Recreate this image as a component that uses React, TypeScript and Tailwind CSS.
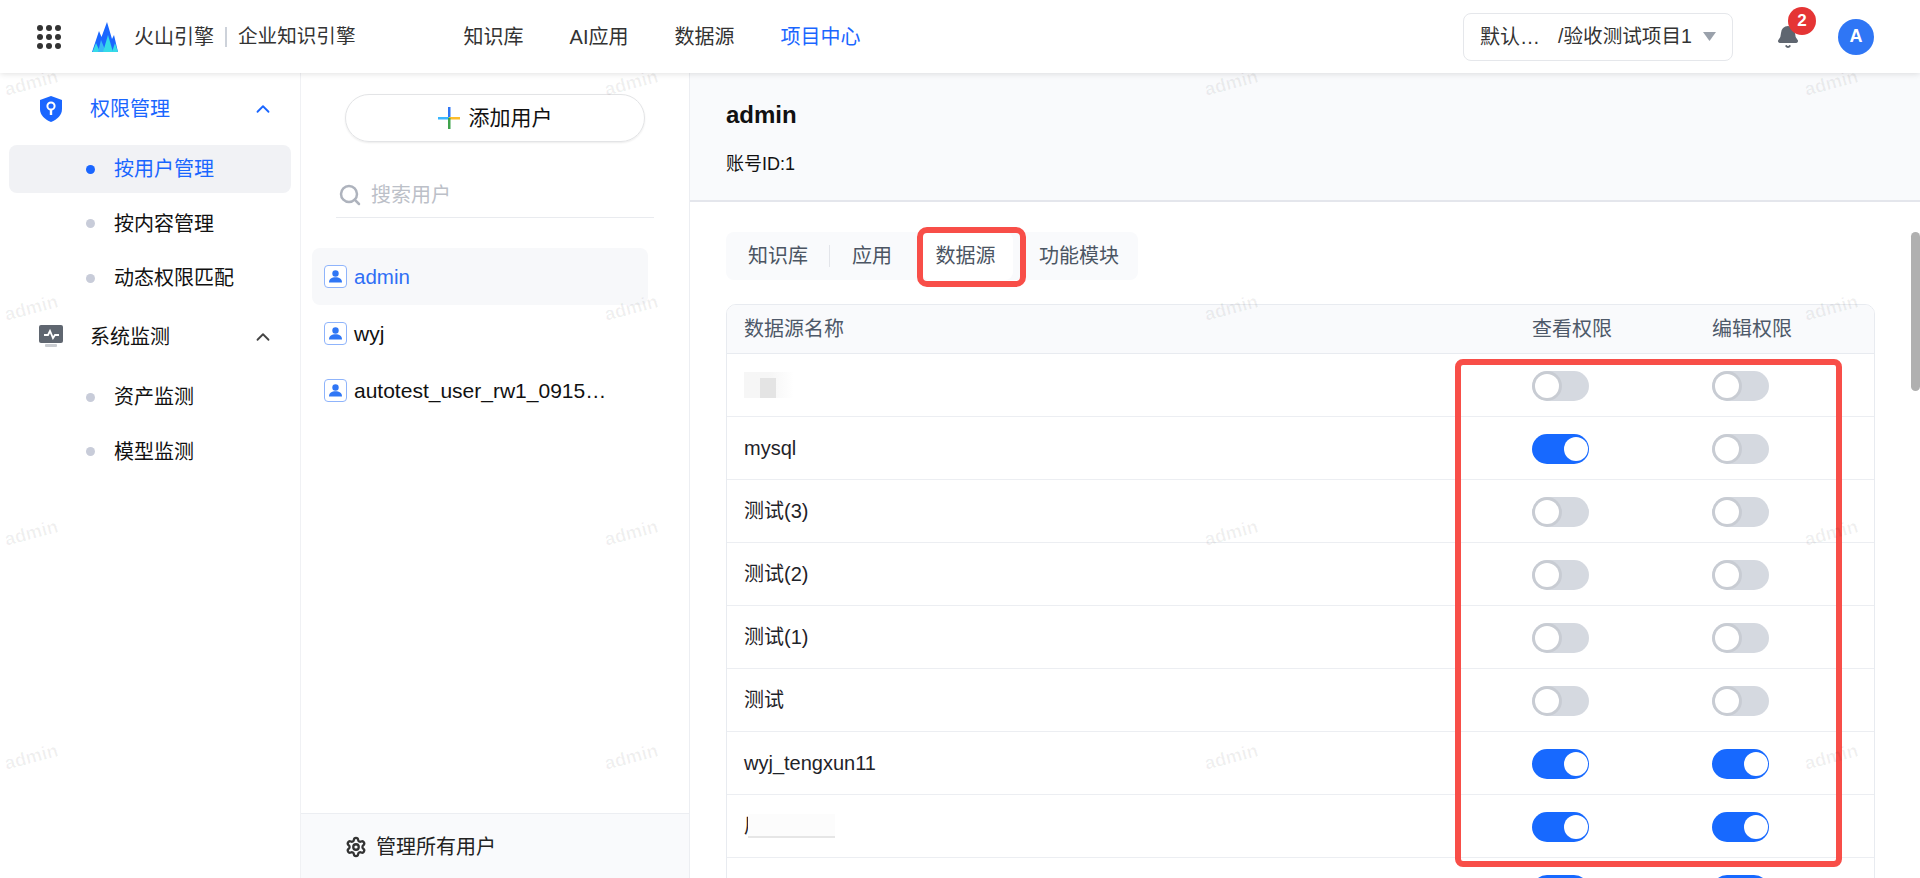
import { Bell, ChevronUp, Search, Settings } from "lucide-react";

const rows = [
  { name: "blur1", view: false, edit: false },
  { name: "mysql", view: true, edit: false },
  { name: "测试(3)", view: false, edit: false },
  { name: "测试(2)", view: false, edit: false },
  { name: "测试(1)", view: false, edit: false },
  { name: "测试", view: false, edit: false },
  { name: "wyj_tengxun11", view: true, edit: true },
  { name: "blur2", view: true, edit: true },
  { name: "", view: true, edit: true },
];

const watermarkXs = [0, 600, 1200, 1800];
const watermarkYs = [69, 294, 519, 743];

function Toggle({ on }: { on: boolean }) {
  return (
    <div
      className={
        on
          ? "flex h-[30px] w-[57px] items-center justify-end overflow-hidden rounded-full bg-[#1769ff] pr-[1px]"
          : "flex h-[30px] w-[57px] items-center justify-start overflow-hidden rounded-full bg-[#d5d9e0] pl-[3px]"
      }
    >
      <div
        className={
          on
            ? "h-[24px] w-[24px] rounded-full bg-white"
            : "h-[24px] w-[24px] rounded-full bg-white shadow-[0_0_0_3px_#c8ccd3]"
        }
      />
    </div>
  );
}

function RowName({ name }: { name: string }) {
  if (name === "blur1") {
    return (
      <div className="flex h-[26px] w-[50px] items-end bg-gradient-to-r from-[#f6f6f6] via-[#f6f6f6] to-white">
        <div className="ml-[16px] h-[20px] w-[16px] bg-[#e4e4e4]" />
      </div>
    );
  }
  if (name === "blur2") {
    return (
      <div className="flex items-center">
        <span>展</span>
        <div className="relative -ml-[16px] h-[24px] w-[87px] border-b-2 border-[#e6e6e6] bg-[#fcfcfc]" />
      </div>
    );
  }
  return <span>{name}</span>;
}

function SubItem({ label, active }: { label: string; active?: boolean }) {
  return (
    <div
      className={
        active
          ? "mx-[9px] flex h-[48px] items-center rounded-lg bg-[#f1f2f5] pl-[77px] text-[#1a66ff]"
          : "mx-[9px] flex h-[48px] items-center pl-[77px] text-[#111]"
      }
    >
      <span
        className={
          active
            ? "mr-[19px] h-[9px] w-[9px] rounded-full bg-[#1a66ff]"
            : "mr-[19px] h-[9px] w-[9px] rounded-full bg-[#c8ccd9]"
        }
      />
      {label}
    </div>
  );
}

function UserIcon() {
  return (
    <svg width="24" height="24" viewBox="0 0 24 24" className="mr-[6px] shrink-0">
      <rect x="0.5" y="0.5" width="22" height="22" rx="3.5" fill="white" stroke="#8fb4fb" />
      <circle cx="11.5" cy="8.5" r="3.2" fill="#2f76f5" />
      <path d="M5 17.5c0-3.6 2.8-5.2 6.5-5.2s6.5 1.6 6.5 5.2z" fill="#2f76f5" />
    </svg>
  );
}

export default function App() {
  return (
    <div className="relative h-[878px] w-[1920px] overflow-hidden bg-white font-['Liberation_Sans','Noto_Sans_CJK_SC',sans-serif] text-[20px] text-[#1f2329]">
      <header className="relative z-20 flex h-[73px] items-center bg-white shadow-[0_1px_6px_rgba(0,0,0,0.12)]">
        <div className="ml-[37px] grid grid-cols-3 gap-x-[3px] gap-y-[3px]">
          {Array.from({ length: 9 }).map((_, i) => (
            <span key={i} className="h-[6px] w-[6px] rounded-full bg-[#333]" />
          ))}
        </div>
        <svg width="26" height="30" viewBox="0 0 26 30" className="ml-[31px]">
          <path d="M0 30 L7 9 L9.5 15 L15 0 L20 17 L22 13 L26 30 Z" fill="#1a66ff" />
          <path d="M0.5 30 L4 21 L8 30 Z" fill="#35dbe8" />
          <path d="M6 30 L9 18 L14 30 Z" fill="#38b8f5" />
          <path d="M11 30 L16 13 L21 30 Z" fill="#35dbe8" />
          <path d="M20 30 L23 21 L26 30 Z" fill="#35dbe8" />
        </svg>
        <span className="ml-[16px] text-[#333]">火山引擎</span>
        <span className="ml-[11px] h-[20px] w-[2px] bg-[#cdd2da]" />
        <span className="ml-[11px] text-[19.6px] text-[#333]">企业知识引擎</span>
        <nav className="ml-[108px] flex gap-[46px] text-[#333]">
          <span>知识库</span>
          <span>AI应用</span>
          <span>数据源</span>
          <span className="text-[#1a66ff]">项目中心</span>
        </nav>
        <div className="ml-auto flex h-[48px] w-[270px] items-center rounded-lg border border-[#e5e7eb] pl-[16px] text-[#333]">
          <span>默认…</span>
          <span className="ml-[18px] text-[19.6px]">/验收测试项目1</span>
          <svg width="13" height="9" viewBox="0 0 13 9" className="ml-[11px]">
            <path d="M0 0h13L6.500 9z" fill="#9aa1ab" />
          </svg>
        </div>
        <div className="relative ml-[43px] h-[28px] w-[24px]">
          <Bell size={24} fill="#5f6670" stroke="#5f6670" className="mt-[2px]" />
          <span className="absolute left-[12px] top-[-16px] flex h-[28px] w-[28px] items-center justify-center rounded-full bg-[#e53535] text-[17px] font-bold text-white">
            2
          </span>
        </div>
        <div className="ml-[38px] mr-[46px] flex h-[36px] w-[36px] items-center justify-center rounded-full bg-[#2f76f5] text-[18px] font-bold text-white">
          A
        </div>
      </header>

      <div className="flex h-[805px]">
        <aside className="w-[301px] shrink-0 border-r border-[#f0f1f4] pt-[12px]">
          <div className="flex h-[48px] items-center pl-[39px] text-[#1a66ff]">
            <svg width="24" height="26" viewBox="0 0 24 26">
              <path d="M12 0l11 4v9c0 6-4.500 10.500-11 13C5.500 23.500 1 19 1 13V4z" fill="#1a66ff" />
              <circle cx="12" cy="10" r="3.600" fill="none" stroke="white" strokeWidth="2" />
              <path d="M12 13v6" stroke="white" strokeWidth="2.400" />
            </svg>
            <span className="ml-[27px]">权限管理</span>
            <ChevronUp size={22} strokeWidth={2} className="ml-[82px]" />
          </div>
          <div className="mt-[12px] flex flex-col gap-[6.500px]">
            <SubItem label="按用户管理" active />
            <SubItem label="按内容管理" />
            <SubItem label="动态权限匹配" />
          </div>
          <div className="mt-[11px] flex h-[48px] items-center pl-[39px] text-[#111]">
            <svg width="25" height="24" viewBox="0 0 25 24">
              <rect x="0" y="0" width="24" height="18" rx="2" fill="#5f6670" />
              <rect x="6" y="19" width="12" height="3" rx="1" fill="#c9ccd1" />
              <path d="M5 10h4l2-4 3 7 2-3h4" fill="none" stroke="white" strokeWidth="1.800" />
            </svg>
            <span className="ml-[26px]">系统监测</span>
            <ChevronUp size={22} strokeWidth={2} color="#444" className="ml-[82px]" />
          </div>
          <div className="mt-[12px] flex flex-col gap-[6.500px]">
            <SubItem label="资产监测" />
            <SubItem label="模型监测" />
          </div>
        </aside>

        <section className="flex w-[389px] shrink-0 flex-col border-r border-[#eceef2]">
          <button className="mx-[44px] mt-[21px] flex h-[48px] items-center justify-center rounded-full border border-[#e3e4e6] shadow-[0_1px_2px_rgba(0,0,0,0.08)]">
            <svg width="22" height="22" viewBox="0 0 22 22">
              <rect x="10" y="0" width="2.500" height="11" fill="#2f76f5" />
              <rect x="0" y="10" width="11" height="2.500" fill="#38b6ff" />
              <rect x="11" y="10" width="11" height="2.500" fill="#fbbc2c" />
              <rect x="10" y="11" width="2.500" height="11" fill="#3fa34d" />
            </svg>
            <span className="ml-[9px] text-[21px] text-[#111]">添加用户</span>
          </button>
          <div className="mx-[35px] mt-[22px] flex h-[54px] items-center border-b border-[#e9ebef] pl-[2px] pt-[8px] text-[#bcc0c8]">
            <Search size={24} strokeWidth={2.500} color="#aeb3bd" />
            <span className="ml-[9px]">搜索用户</span>
          </div>
          <div className="mt-[30px] flex flex-1 flex-col pl-[11px] pr-[41px]">
            <div className="flex h-[57px] items-center rounded-lg bg-[#f7f8fa] pl-[12px] text-[20.5px] text-[#2f6ff5]">
              <UserIcon />
              <span className="pt-[1px]">admin</span>
            </div>
            <div className="flex h-[57px] items-center pl-[12px] text-[21px] text-[#111]">
              <UserIcon />
              wyj
            </div>
            <div className="flex h-[57px] items-center pl-[12px] text-[21px] text-[#111]">
              <UserIcon />
              <span className="whitespace-nowrap">autotest_user_rw1_0915…</span>
            </div>
          </div>
          <div className="flex h-[65px] items-center border-t border-[#eceef2] bg-[#f9fafc] pl-[44px] pt-[2px] text-[#222]">
            <Settings size={22} strokeWidth={2.500} color="#333" />
            <span className="ml-[9px]">管理所有用户</span>
          </div>
        </section>

        <main className="flex-1">
          <div className="h-[129px] border-b-2 border-[#e4e6ec] bg-[#f9fafc] pl-[36px]">
            <div className="pt-[27px] text-[24px] font-bold leading-[30px] text-[#111]">admin</div>
            <div className="mt-[21px] text-[18px] leading-[26px] text-[#111]">账号ID:1</div>
          </div>
          <div className="pl-[36px] pr-[45px] pt-[30px]">
            <div className="flex h-[48px] w-[412px] items-center rounded-lg bg-[#f9fafc] pl-[22px] text-[#4b5563]">
              <span>知识库</span>
              <span className="ml-[21px] mr-[22px] h-[22px] w-[1px] bg-[#e3e5ea]" />
              <span>应用</span>
              <span className="ml-[30px] flex h-[48px] w-[91px] items-center justify-center rounded-lg bg-white pr-[4px]">
                数据源
              </span>
              <span className="ml-[26px]">功能模块</span>
            </div>
            <div className="mt-[24px] overflow-hidden rounded-t-[10px] border border-[#e8ebf0]">
              <div className="flex h-[49px] items-center border-b border-[#e8ebf0] bg-[#f9fafc] pl-[17px] text-[#4e5969]">
                <span className="w-[788px]">数据源名称</span>
                <span className="w-[180px]">查看权限</span>
                <span>编辑权限</span>
              </div>
              {rows.map((row, i) => (
                <div key={i} className="flex h-[63px] items-center border-b border-[#eceef2] pl-[17px] pt-[2px]">
                  <div className="mb-[2px] w-[788px]">
                    <RowName name={row.name} />
                  </div>
                  <div className="w-[180px]">
                    <Toggle on={row.view} />
                  </div>
                  <Toggle on={row.edit} />
                </div>
              ))}
            </div>
          </div>
        </main>
      </div>

      <div className="absolute right-0 top-[232px] h-[159px] w-[9px] rounded-full bg-[#b0b0b0]" />

      {/* red callouts */}
      <div className="absolute left-[917px] top-[227px] z-10 h-[60px] w-[109px] rounded-[10px] border-[6px] border-[#f84e48]" />
      <div className="absolute left-[1455px] top-[359px] z-10 h-[508px] w-[387px] rounded-[8px] border-[6px] border-[#f84e48]" />

      {/* watermark */}
      <div className="pointer-events-none absolute inset-0 z-10">
        {watermarkYs.map((y) =>
          watermarkXs.map((x) => (
            <span
              key={`${x}-${y}`}
              className="absolute -rotate-[15deg] text-[18.5px] font-bold text-black/[0.06]"
              style={{ left: x + 4, top: y }}
            >
              admin
            </span>
          ))
        )}
      </div>
    </div>
  );
}
